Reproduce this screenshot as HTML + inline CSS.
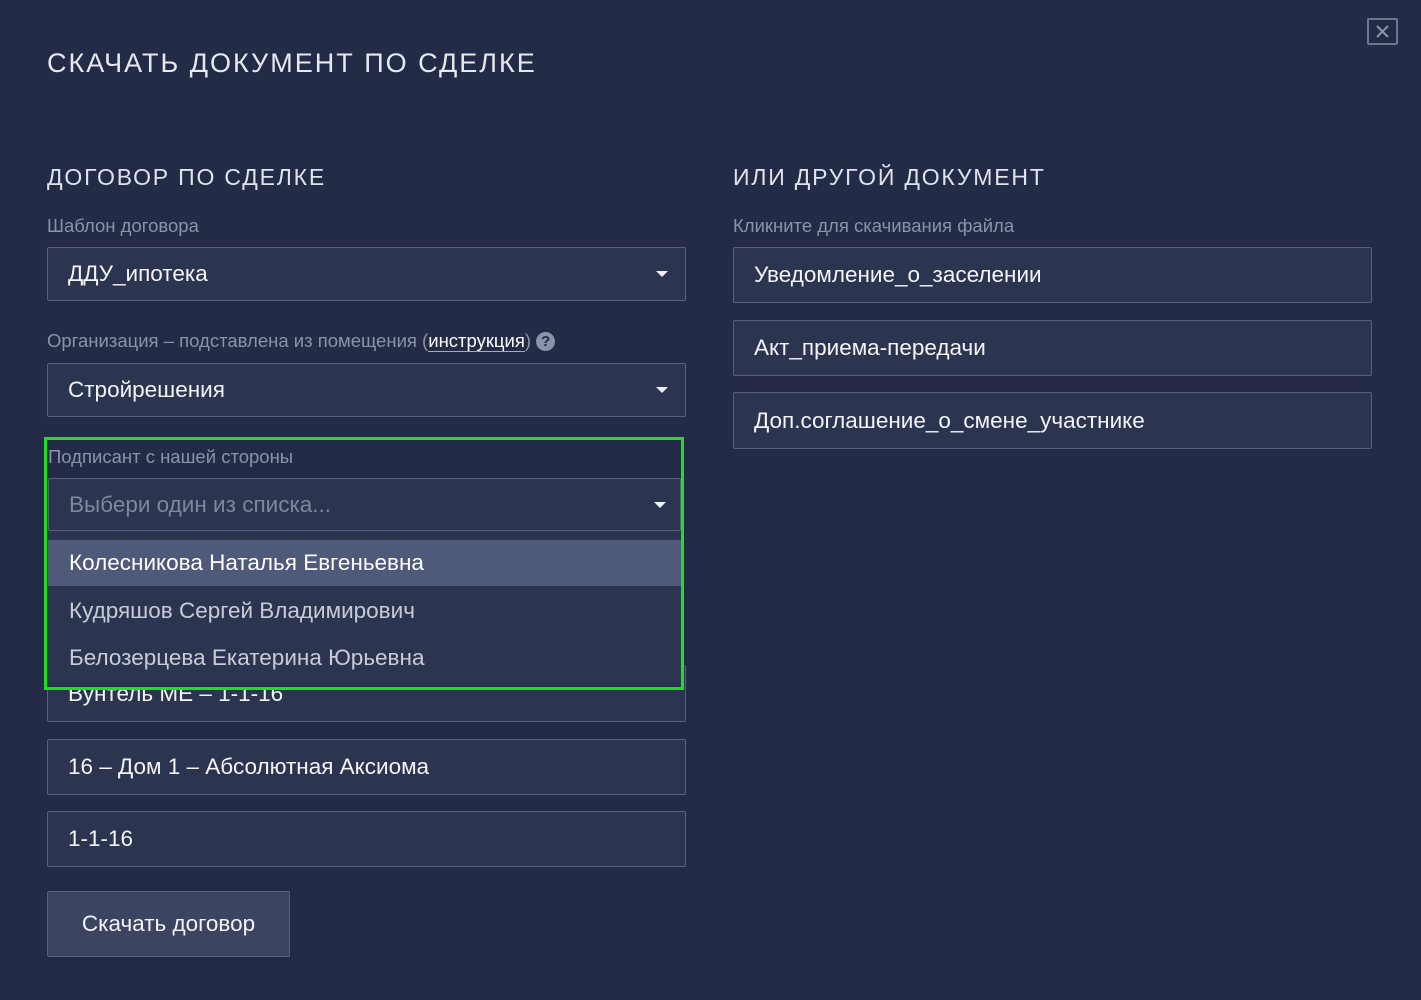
<!DOCTYPE html>
<html><head><meta charset="utf-8"><style>
body{margin:0;width:1421px;height:1000px;background:#232b47;font-family:"Liberation Sans",sans-serif;color:#e8ebf2;position:relative;overflow:hidden}
.a{position:absolute}
.t{font-size:27px;letter-spacing:2px;left:47px;top:48px;color:#e6e9f0}
.h{font-size:23px;letter-spacing:1.8px;color:#dfe3ec;top:164px}
.l{font-size:18.5px;color:#8c93a8}
.f{position:absolute;box-sizing:border-box;background:#2c3550;border:1px solid #59617a;border-radius:2px;font-size:22.5px;color:#f3f4f8;padding-left:20px;display:flex;align-items:center}
.car{position:absolute;right:17px;top:50%;margin-top:-3px;width:0;height:0;border-left:6px solid transparent;border-right:6px solid transparent;border-top:6px solid #eef0f5}
</style></head><body>
<div class="a t">СКАЧАТЬ ДОКУМЕНТ ПО СДЕЛКЕ</div>
<div class="a" style="left:1367px;top:18px;width:31px;height:27px;box-sizing:border-box;border:2px solid #6e7690;border-radius:2px">
<svg width="27" height="23" style="position:absolute;left:0;top:0"><path d="M8 6L19 17M19 6L8 17" stroke="#8d94ab" stroke-width="2"/></svg></div>
<div class="a h" style="left:47px">ДОГОВОР ПО СДЕЛКЕ</div>
<div class="a h" style="left:733px">ИЛИ ДРУГОЙ ДОКУМЕНТ</div>
<div class="a l" style="left:47px;top:215px">Шаблон договора</div>
<div class="f" style="left:47px;top:247px;width:639px;height:54px">ДДУ_ипотека<span class="car"></span></div>
<div class="a l" style="left:47px;top:330px">Организация – подставлена из помещения (<span style="color:#fff;border-bottom:1px solid #aaa">инструкция</span>) <span style="display:inline-block;width:19px;height:19px;border-radius:50%;background:#8c93a8;color:#232b47;font-size:15px;font-weight:bold;text-align:center;line-height:19px;vertical-align:1px">?</span></div>
<div class="f" style="left:47px;top:363px;width:639px;height:54px">Стройрешения<span class="car"></span></div>
<div class="f" style="left:47px;top:665px;width:639px;height:57px">Вунтель МЕ – 1-1-16</div>
<div class="f" style="left:47px;top:739px;width:639px;height:56px">16 – Дом 1 – Абсолютная Аксиома</div>
<div class="f" style="left:47px;top:811px;width:639px;height:56px">1-1-16</div>
<div class="f" style="left:47px;top:891px;width:243px;height:66px;background:#3b4460;justify-content:center;padding:0">Скачать договор</div>
<div class="a l" style="left:733px;top:215px">Кликните для скачивания файла</div>
<div class="f" style="left:733px;top:247px;width:639px;height:56px">Уведомление_о_заселении</div>
<div class="f" style="left:733px;top:320px;width:639px;height:56px">Акт_приема-передачи</div>
<div class="f" style="left:733px;top:392px;width:639px;height:57px">Доп.соглашение_о_смене_участнике</div>
<div class="a" style="left:44px;top:437px;width:640px;height:253px;box-sizing:border-box;border:3px solid #1fe01f;background:#232b47"></div>
<div class="a l" style="left:48px;top:446px">Подписант с нашей стороны</div>
<div class="f" style="left:48px;top:478px;width:633px;height:53px;color:#7f879d">Выбери один из списка...<span class="car" style="right:14px"></span></div>
<div class="a" style="left:48px;top:531px;width:633px;height:155px;background:#2c3550;font-size:22.5px;color:#c8ccd8">
<div style="position:absolute;top:9px;left:0;right:0;height:46px;background:#4f5a7b;color:#fff;padding-left:21px;line-height:46px">Колесникова Наталья Евгеньевна</div>
<div style="position:absolute;top:57px;padding-left:21px;line-height:46px">Кудряшов Сергей Владимирович</div>
<div style="position:absolute;top:104px;padding-left:21px;line-height:46px">Белозерцева Екатерина Юрьевна</div>
</div>
</body></html>
